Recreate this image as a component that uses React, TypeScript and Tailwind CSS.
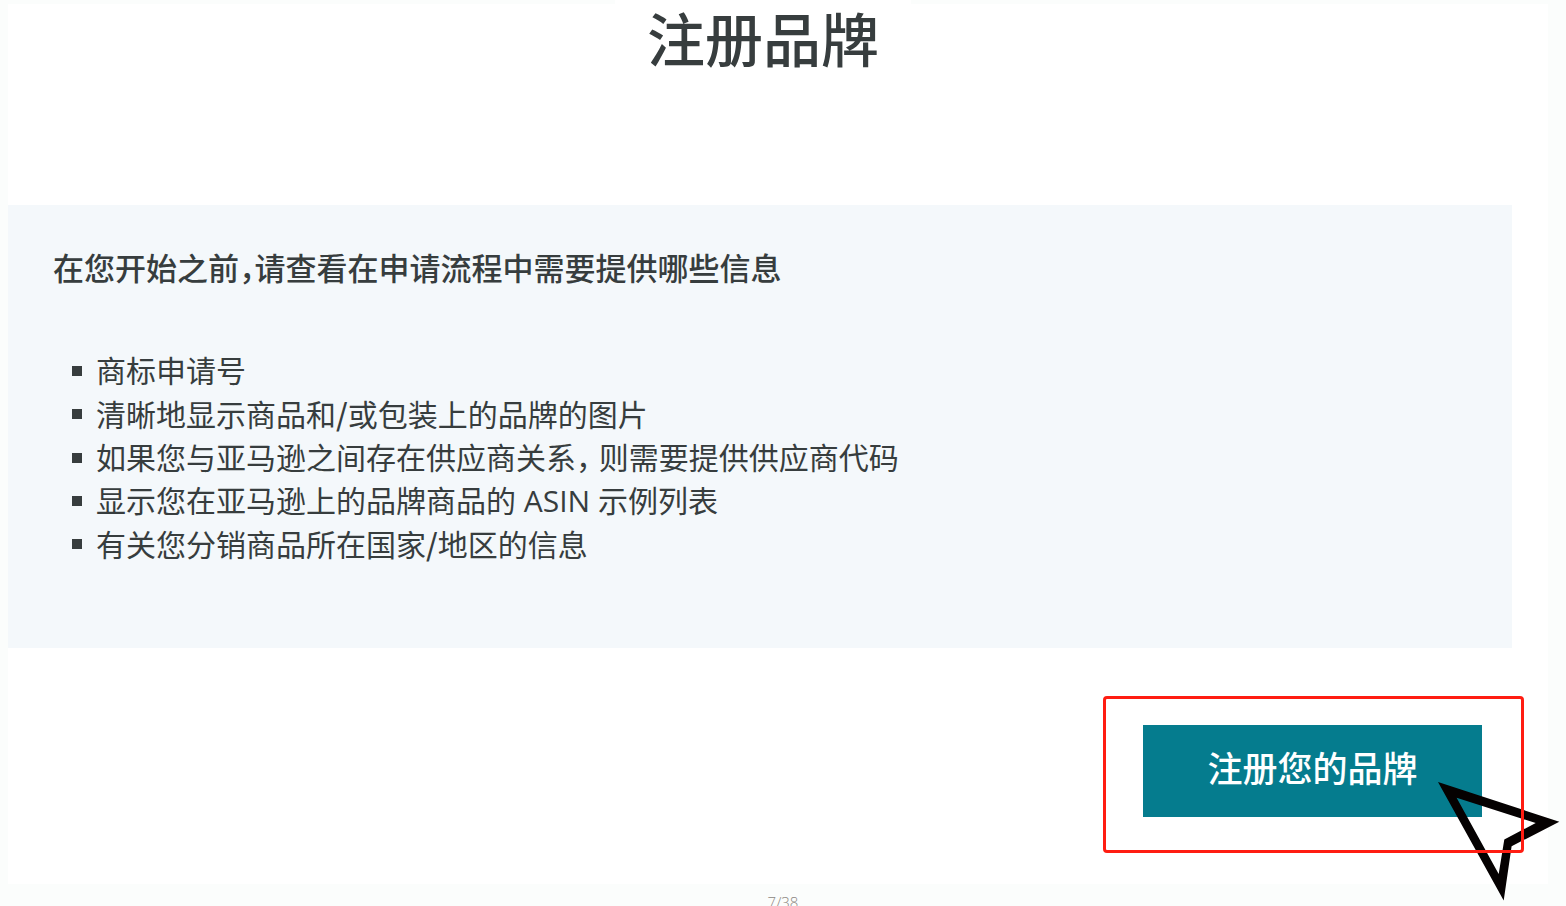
import type { ReactNode } from 'react';

// Punctuation set at half width, as in proportional Chinese typesetting
function Comma() {
  return <span className="[font-feature-settings:'halt']">，</span>;
}

function Slash() {
  return (
    <span className="font-['Noto_Sans_CJK_SC',sans-serif] font-medium">/</span>
  );
}

const requirements: { id: string; content: ReactNode }[] = [
  { id: 'trademark', content: '商标申请号' },
  {
    id: 'images',
    content: (
      <>
        清晰地显示商品和
        <Slash />
        或包装上的品牌的图片
      </>
    ),
  },
  {
    id: 'vendor',
    content: (
      <>
        如果您与亚马逊之间存在供应商关系
        <Comma /> 则需要提供供应商代码
      </>
    ),
  },
  {
    id: 'asin',
    content: (
      <>
        显示您在亚马逊上的品牌商品的 <span className="font-medium">ASIN</span>{' '}
        示例列表
      </>
    ),
  },
  {
    id: 'regions',
    content: (
      <>
        有关您分销商品所在国家
        <Slash />
        地区的信息
      </>
    ),
  },
];

function Pointer() {
  return (
    <svg
      aria-hidden="true"
      viewBox="0 0 122 119"
      className="pointer-events-none absolute -right-9 -bottom-12 h-[119px] w-[122px]"
    >
      <path
        fill="#050101"
        fillRule="evenodd"
        d="M0 0 L121.3 39.7 L73.6 64.3 L65.7 118.5 Z M18.6 15.8 L60.7 92 L66.3 57.5 L97.7 41 Z"
      />
    </svg>
  );
}

export default function App() {
  return (
    <div
      lang="zh-CN"
      className="flex h-screen flex-col overflow-hidden bg-[#fbfdfc] font-['Open_Sans','Noto_Sans_CJK_SC',sans-serif] text-[#373d3e]"
    >
      <main className="mr-[18px] ml-2 shrink-0 bg-white pb-[31px]">
        {/* Title */}
        <header className="flex h-[205px] items-start justify-center border-t-4 border-[#fbfdfc] pr-[30px]">
          <h1 className="-mt-1 bg-white px-8 text-[58px] leading-[79px] font-medium">
            注册品牌
          </h1>
        </header>

        {/* Requirements */}
        <section className="mr-9 bg-[#f4f8fb] pt-[41px] pr-12 pb-[82px] pl-[45px]">
          <h2 className="text-[31px] leading-[44px] font-medium">
            在您开始之前
            <Comma />
            请查看在申请流程中需要提供哪些信息
          </h2>
          <ul className="mt-[59px] pl-[19px] text-[30px] leading-[43px]">
            {requirements.map((item) => (
              <li key={item.id} className="flex items-center gap-3.5">
                <span className="h-2.5 w-2.5 shrink-0 bg-[#373d3e]" />
                <span>{item.content}</span>
              </li>
            ))}
          </ul>
        </section>

        {/* Call to action */}
        <div className="mt-12 mr-6 flex justify-end">
          <div className="relative pt-[29px] pr-[42px] pb-9 pl-10">
            <button
              type="button"
              className="h-[92px] w-[339px] bg-[#057c8e] pb-1 text-[35px] leading-[44px] font-medium text-white"
            >
              注册您的品牌
            </button>
            <Pointer />
            <span className="pointer-events-none absolute inset-0 rounded border-[3px] border-[#ff1d12]" />
          </div>
        </div>
      </main>

      <footer className="shrink-0 pt-2 text-center text-[15px] leading-5 font-light text-[#8c8781]">
        7/38
      </footer>
    </div>
  );
}
